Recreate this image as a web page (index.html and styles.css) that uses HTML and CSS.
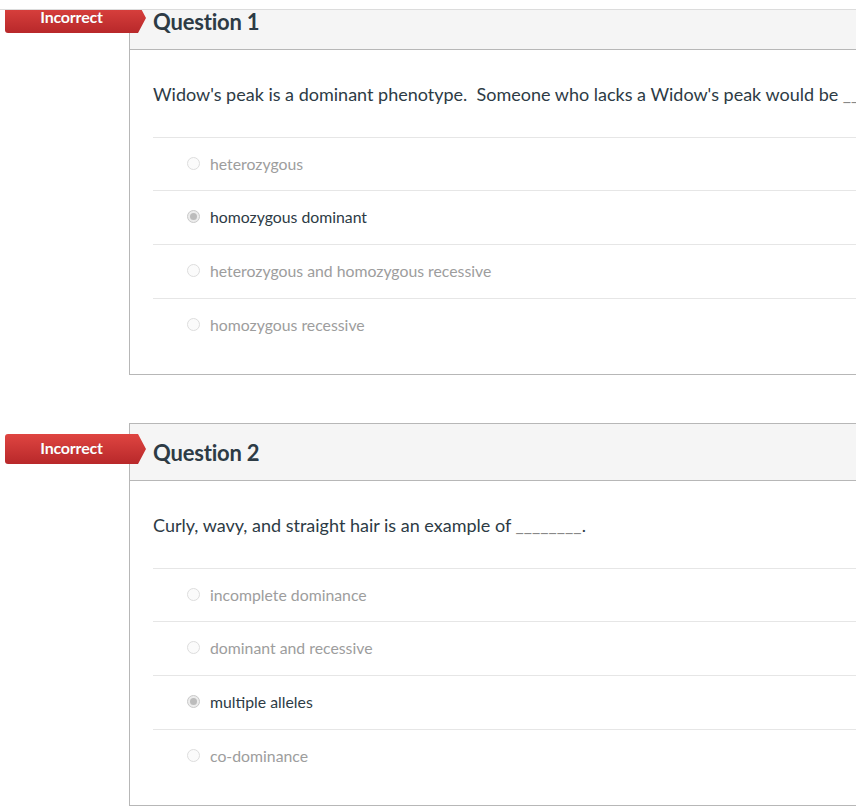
FILE: index.html
```html
<!DOCTYPE html>
<html>
<head>
<meta charset="utf-8">
<link rel="stylesheet" href="styles.css">
</head>
<body>
<div class="topbar"></div>
<div class="viewport">
  <div class="quiz">
    <div class="question first">
      <div class="badge">Incorrect</div>
      <div class="card">
        <div class="card-header"><h2 class="title">Question 1</h2></div>
        <div class="card-body">
          <p class="qtext">Widow's peak is a dominant phenotype.&nbsp; Someone who lacks a Widow's peak would be <span class="blank">________</span>.</p>
          <ul class="answers">
            <li class="answer"><span class="radio"></span><span class="label">heterozygous</span></li>
            <li class="answer selected"><span class="radio"></span><span class="label">homozygous dominant</span></li>
            <li class="answer"><span class="radio"></span><span class="label">heterozygous and homozygous recessive</span></li>
            <li class="answer"><span class="radio"></span><span class="label">homozygous recessive</span></li>
          </ul>
        </div>
      </div>
    </div>
    <div class="question">
      <div class="badge">Incorrect</div>
      <div class="card">
        <div class="card-header"><h2 class="title">Question 2</h2></div>
        <div class="card-body">
          <p class="qtext">Curly, wavy, and straight hair is an example of <span class="blank">________</span>.</p>
          <ul class="answers">
            <li class="answer"><span class="radio"></span><span class="label">incomplete dominance</span></li>
            <li class="answer"><span class="radio"></span><span class="label">dominant and recessive</span></li>
            <li class="answer selected"><span class="radio"></span><span class="label">multiple alleles</span></li>
            <li class="answer"><span class="radio"></span><span class="label">co-dominance</span></li>
          </ul>
        </div>
      </div>
    </div>
  </div>
</div>
</body>
</html>
```
FILE: styles.css
```css
* { box-sizing: border-box; }
html, body { margin: 0; padding: 0; background: #fff; }
body {
  font-family: Lato, "Open Sans", "Liberation Sans", sans-serif;
  color: #2d3b45;
  width: 856px;
  height: 811px;
  overflow: hidden;
}
.topbar {
  height: 10px;
  border-bottom: 1px solid #dcdcdc;
}
.viewport {
  height: 801px;
  overflow: hidden;
}
.quiz {
  margin-top: -18px;
}
.question {
  position: relative;
  padding-left: 129px;
  margin-bottom: 48px;
}
.card {
  width: 900px;
  border: 1px solid #b7b7b7;
}
.card-header {
  height: 57px;
  background: #f5f5f5;
  border-bottom: 1px solid #b7b7b7;
  display: flex;
  align-items: center;
  padding-left: 23px;
}
.title {
  margin: 0;
  font-size: 22px;
  font-weight: 700;
  color: #2d3b45;
  letter-spacing: -0.2px;
}
.card-body {
  padding: 32px 0 22px 23px;
}
.qtext {
  margin: 0 0 31px 0;
  font-size: 18px;
  line-height: 24px;
  white-space: nowrap;
}
.blank { color: #888; }
.answers {
  list-style: none;
  margin: 0;
  padding: 0;
}
.answer {
  height: 54px;
  border-top: 1px solid #e6e6e6;
  display: flex;
  align-items: center;
  padding-left: 34px;
  padding-bottom: 2px;
  font-size: 15.8px;
  color: #9d9d9d;
}
.answer:first-child { height: 53px; }
.answer.selected { color: #2d3b45; }
.radio {
  width: 13px;
  height: 13px;
  border-radius: 50%;
  border: 1px solid #dddddd;
  background: #fbfbfb;
  margin-right: 10px;
  display: flex;
  align-items: center;
  justify-content: center;
  flex: none;
}
.answer.selected .radio {
  border-color: #c9c9c9;
  background: #ececec;
}
.answer.selected .radio::after {
  content: "";
  width: 7px;
  height: 7px;
  border-radius: 50%;
  background: #bcbcbc;
}
.badge {
  position: absolute;
  left: 5px;
  top: 11px;
  width: 141px;
  height: 30px;
  padding: 0 8px 3px 0;
  display: flex;
  align-items: center;
  justify-content: center;
  color: #fff;
  font-weight: 700;
  font-size: 16px;
  letter-spacing: -0.2px;
  background: linear-gradient(#df4541, #b8282a);
  border-radius: 3px 0 0 3px;
  clip-path: polygon(0 0, calc(100% - 8px) 0, 100% 50%, calc(100% - 8px) 100%, 0 100%);
  text-shadow: 0 0 1px rgba(0,0,0,0.2);
}
```
